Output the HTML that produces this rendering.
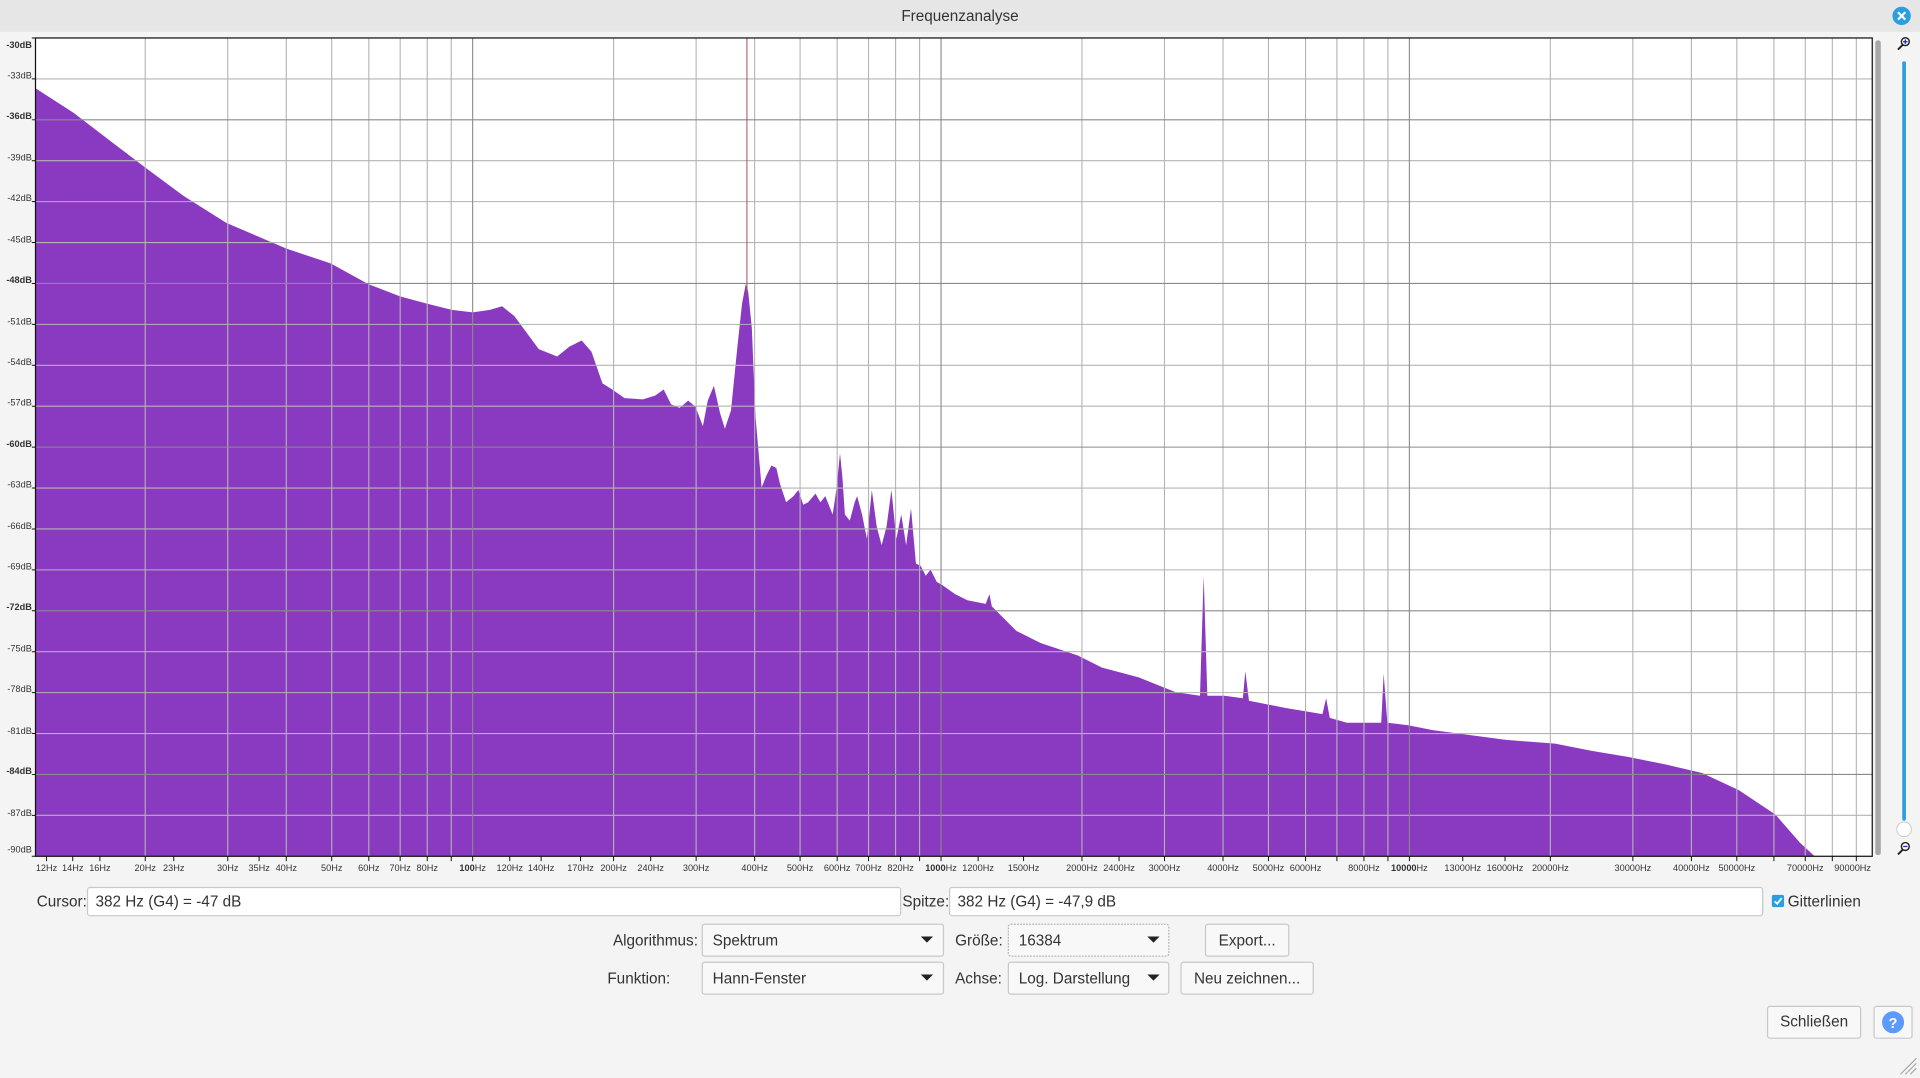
<!DOCTYPE html>
<html><head><meta charset="utf-8"><style>
html,body{margin:0;padding:0;background:#f4f4f4;overflow:hidden}
svg{display:block}
text{font-family:"Liberation Sans",sans-serif;fill:#333}
</style></head><body>
<svg width="1920" height="1078" viewBox="0 0 1568 880" preserveAspectRatio="none" xmlns="http://www.w3.org/2000/svg">
<rect x="0" y="0" width="1568" height="880" fill="#f4f4f4"/>
<rect x="0" y="0" width="1568" height="26" fill="#e6e6e6"/>
<text x="784" y="17" font-size="12.5" text-anchor="middle" fill="#333">Frequenzanalyse</text>
<circle cx="1553" cy="13" r="7.5" fill="#2a9ee0"/>
<path d="M1550 10 L1556 16 M1556 10 L1550 16" stroke="#fff" stroke-width="1.8"/>

<!-- plot -->
<rect x="29" y="31" width="1500" height="668" fill="#fff"/>
<polygon fill="#8a3ac0" points="29,699 29,72 60,92 90,115 119,137 150,160 185,182 234,203 270,215 301,232 327,242 349,248 369,253 386,255 400,253 410,250 420,258 440,285 455,291 465,283 475,278 483,287 492,313 500,318 510,325 525,326 535,323 542,318 548,330 555,333 562,327 568,332 574,348 578,327 583,315 588,337 592,350 597,335 602,285 606,248 609,232 611,238 614,268 617,340 620,375 622,398 626,388 630,380 634,382 637,395 642,410 648,405 652,400 656,412 660,410 666,403 670,410 674,405 680,420 683,400 686,370 688,390 690,420 694,425 698,410 700,405 704,420 708,440 712,400 716,430 720,445 724,430 728,400 732,440 736,420 740,445 744,415 748,460 752,462 756,470 760,465 765,475 770,478 780,485 790,490 805,493 808,485 810,495 815,500 830,515 850,525 880,535 900,545 930,553 960,565 980,568 983,470 986,568 1000,568 1015,570 1017,548 1020,572 1050,578 1080,583 1083,570 1086,586 1100,590 1128,590 1130,550 1133,590 1150,592 1170,596 1200,600 1230,604 1270,607 1300,613 1330,618 1360,624 1390,631 1420,645 1450,665 1470,688 1482,699"/>
<g stroke="#b4b4b4" stroke-width="0.9">
<path d="M29 64.4H1529M29 131.2H1529M29 164.6H1529M29 198H1529M29 264.8H1529M29 298.2H1529M29 331.6H1529M29 398.4H1529M29 431.8H1529M29 465.2H1529M29 532H1529M29 565.4H1529M29 598.8H1529M29 665.6H1529"/>
<path d="M118.6 31V699M186 31V699M233.8 31V699M270.9 31V699M301.2 31V699M326.8 31V699M348.9 31V699M368.5 31V699
M501.1 31V699M568.5 31V699M616.3 31V699M653.4 31V699M683.7 31V699M709.3 31V699M731.4 31V699M751 31V699
M883.6 31V699M951 31V699M998.8 31V699M1035.9 31V699M1066.2 31V699M1091.8 31V699M1113.9 31V699M1133.5 31V699
M1266.1 31V699M1333.5 31V699M1381.3 31V699M1418.4 31V699M1448.7 31V699M1474.3 31V699M1496.4 31V699M1516 31V699"/>
</g>
<g stroke="#8a8a8a" stroke-width="0.9">
<path d="M29 97.8H1529M29 231.4H1529M29 365H1529M29 498.6H1529M29 632.2H1529"/>
<path d="M386 31V699M768.5 31V699M1151 31V699"/>
</g>
<line x1="610" y1="31" x2="610" y2="240" stroke="#a05050" stroke-width="0.8"/>
<rect x="29" y="31" width="1500" height="668" fill="none" stroke="#111" stroke-width="1"/>

<!-- dB labels -->
<g font-size="7.5" text-anchor="end">
<text x="26" y="39" font-weight="bold">-30dB</text>
<text x="26" y="64">-33dB</text>
<text x="26" y="97" font-weight="bold">-36dB</text>
<text x="26" y="131">-39dB</text>
<text x="26" y="164">-42dB</text>
<text x="26" y="198">-45dB</text>
<text x="26" y="231" font-weight="bold">-48dB</text>
<text x="26" y="265">-51dB</text>
<text x="26" y="298">-54dB</text>
<text x="26" y="331">-57dB</text>
<text x="26" y="365" font-weight="bold">-60dB</text>
<text x="26" y="398">-63dB</text>
<text x="26" y="432">-66dB</text>
<text x="26" y="465">-69dB</text>
<text x="26" y="498" font-weight="bold">-72dB</text>
<text x="26" y="532">-75dB</text>
<text x="26" y="565">-78dB</text>
<text x="26" y="599">-81dB</text>
<text x="26" y="632" font-weight="bold">-84dB</text>
<text x="26" y="666">-87dB</text>
<text x="26" y="696">-90dB</text>
</g>
<g stroke="#111" stroke-width="0.8"><path d="M26 31H29M26 64.4H29M26 97.8H29M26 131.2H29M26 164.6H29M26 198H29M26 231.4H29M26 264.8H29M26 298.2H29M26 331.6H29M26 365H29M26 398.4H29M26 431.8H29M26 465.2H29M26 498.6H29M26 532H29M26 565.4H29M26 598.8H29M26 632.2H29M26 665.6H29M26 699H29"/>
<path d="M38 699V703M59.4 699V703M81.6 699V703M118.6 699V703M141.9 699V703M186 699V703M211.6 699V703M233.8 699V703M270.9 699V703M301.2 699V703M326.8 699V703M348.9 699V703M368.5 699V703M386 699V703M416.3 699V703M441.9 699V703M474.1 699V703M501.1 699V703M531.4 699V703M568.5 699V703M616.3 699V703M653.4 699V703M683.7 699V703M709.3 699V703M735.5 699V703M751 699V703M768.5 699V703M798.8 699V703M835.9 699V703M883.6 699V703M913.9 699V703M951 699V703M998.8 699V703M1035.9 699V703M1066.2 699V703M1091.8 699V703M1113.9 699V703M1133.5 699V703M1151 699V703M1194.6 699V703M1229.1 699V703M1266.1 699V703M1333.5 699V703M1381.3 699V703M1418.4 699V703M1448.7 699V703M1474.3 699V703M1496.4 699V703M1516 699V703"/></g>
<g font-size="7.5" text-anchor="middle">
<text x="38" y="711">12Hz</text><text x="59.4" y="711">14Hz</text><text x="81.6" y="711">16Hz</text>
<text x="118.6" y="711">20Hz</text><text x="141.9" y="711">23Hz</text><text x="186" y="711">30Hz</text>
<text x="211.6" y="711">35Hz</text><text x="233.8" y="711">40Hz</text><text x="270.9" y="711">50Hz</text>
<text x="301.2" y="711">60Hz</text><text x="326.8" y="711">70Hz</text><text x="348.9" y="711">80Hz</text>
<text x="386" y="711"><tspan font-weight="bold">100</tspan>Hz</text>
<text x="416.3" y="711">120Hz</text><text x="441.9" y="711">140Hz</text><text x="474.1" y="711">170Hz</text>
<text x="501.1" y="711">200Hz</text><text x="531.4" y="711">240Hz</text><text x="568.5" y="711">300Hz</text>
<text x="616.3" y="711">400Hz</text><text x="653.4" y="711">500Hz</text><text x="683.7" y="711">600Hz</text>
<text x="709.3" y="711">700Hz</text><text x="735.5" y="711">820Hz</text>
<text x="768.5" y="711"><tspan font-weight="bold">1000</tspan>Hz</text>
<text x="798.8" y="711">1200Hz</text><text x="835.9" y="711">1500Hz</text><text x="883.6" y="711">2000Hz</text>
<text x="913.9" y="711">2400Hz</text><text x="951" y="711">3000Hz</text><text x="998.8" y="711">4000Hz</text>
<text x="1035.9" y="711">5000Hz</text><text x="1066.2" y="711">6000Hz</text><text x="1113.9" y="711">8000Hz</text>
<text x="1151" y="711"><tspan font-weight="bold">10000</tspan>Hz</text>
<text x="1194.6" y="711">13000Hz</text><text x="1229.1" y="711">16000Hz</text><text x="1266.1" y="711">20000Hz</text>
<text x="1333.5" y="711">30000Hz</text><text x="1381.3" y="711">40000Hz</text><text x="1418.4" y="711">50000Hz</text>
<text x="1474.3" y="711">70000Hz</text><text x="1513" y="711">90000Hz</text>
</g>

<!-- scrollbar & slider -->
<rect x="1531.5" y="33" width="4.5" height="665" rx="2" fill="#a8a8a8"/>
<rect x="1553.5" y="50" width="3" height="620" rx="1.5" fill="#2a9ee0"/>
<circle cx="1555" cy="677" r="6" fill="#fff" stroke="#ccc" stroke-width="0.8"/>
<circle cx="1556" cy="34" r="3.2" fill="#fff" stroke="#222" stroke-width="1.2"/>
<path d="M1554 36.5 L1550 40.5" stroke="#222" stroke-width="1.6"/>
<path d="M1554.2 34H1557.8M1556 32.2V35.8" stroke="#2030c0" stroke-width="1.1"/>
<circle cx="1556" cy="691" r="3.2" fill="#fff" stroke="#222" stroke-width="1.2"/>
<path d="M1554 693.5 L1550 697.5" stroke="#222" stroke-width="1.6"/>
<path d="M1554.2 691H1557.8" stroke="#2030c0" stroke-width="1.1"/>

<!-- cursor row -->
<g font-size="12.5">
<text x="30" y="740">Cursor:</text>
<rect x="71.5" y="724.5" width="664" height="23" rx="2" fill="#fff" stroke="#c8c8c8"/>
<text x="78" y="740">382 Hz (G4) = -47 dB</text>
<text x="737" y="740">Spitze:</text>
<rect x="775.5" y="724.5" width="664" height="23" rx="2" fill="#fff" stroke="#c8c8c8"/>
<text x="782" y="740">382 Hz (G4) = -47,9 dB</text>
<rect x="1447" y="730.5" width="10" height="10" rx="1.5" fill="#2a9ee0"/>
<path d="M1449.3 735.8 L1451.4 737.8 L1455 733.2" stroke="#fff" stroke-width="1.5" fill="none"/>
<text x="1460" y="740">Gitterlinien</text>

<text x="570" y="772" text-anchor="end">Algorithmus:</text>
<rect x="573.5" y="754.5" width="197" height="26" rx="2" fill="#f8f8f8" stroke="#c8c8c8"/>
<text x="582" y="772">Spektrum</text>
<path d="M752 764.5h10l-5 5z" fill="#222"/>
<text x="780" y="772">Größe:</text>
<rect x="823.5" y="754.5" width="131" height="26" rx="2" fill="#f8f8f8" stroke="#b8b8b8" stroke-dasharray="1.5 1"/>
<text x="832" y="772">16384</text>
<path d="M937 764.5h10l-5 5z" fill="#222"/>
<rect x="984.5" y="754.5" width="68" height="26" rx="2" fill="#f8f8f8" stroke="#c8c8c8"/>
<text x="1018.5" y="772" text-anchor="middle">Export...</text>

<text x="496" y="803">Funktion:</text>
<rect x="573.5" y="785.5" width="197" height="26" rx="2" fill="#f8f8f8" stroke="#c8c8c8"/>
<text x="582" y="803">Hann-Fenster</text>
<path d="M752 795.5h10l-5 5z" fill="#222"/>
<text x="780" y="803">Achse:</text>
<rect x="823.5" y="785.5" width="131" height="26" rx="2" fill="#f8f8f8" stroke="#c8c8c8"/>
<text x="832" y="803">Log. Darstellung</text>
<path d="M937 795.5h10l-5 5z" fill="#222"/>
<rect x="964.5" y="785.5" width="108" height="26" rx="2" fill="#f8f8f8" stroke="#c8c8c8"/>
<text x="1018.5" y="803" text-anchor="middle">Neu zeichnen...</text>

<rect x="1443.5" y="821.5" width="76" height="26" rx="2" fill="#f8f8f8" stroke="#c8c8c8"/>
<text x="1481.5" y="838" text-anchor="middle">Schließen</text>
</g>
<rect x="1530.5" y="821.5" width="31" height="26" rx="2" fill="#f8f8f8" stroke="#c8c8c8"/>
<circle cx="1546" cy="834.5" r="9" fill="#5c9aff"/>
<text x="1546" y="839" font-size="12" font-weight="bold" text-anchor="middle" style="fill:#fff">?</text>
<path d="M1552 877 L1565 864 M1556 877 L1565 868 M1560 877 L1565 872" stroke="#999" stroke-width="0.8"/>
</svg>
</body></html>
